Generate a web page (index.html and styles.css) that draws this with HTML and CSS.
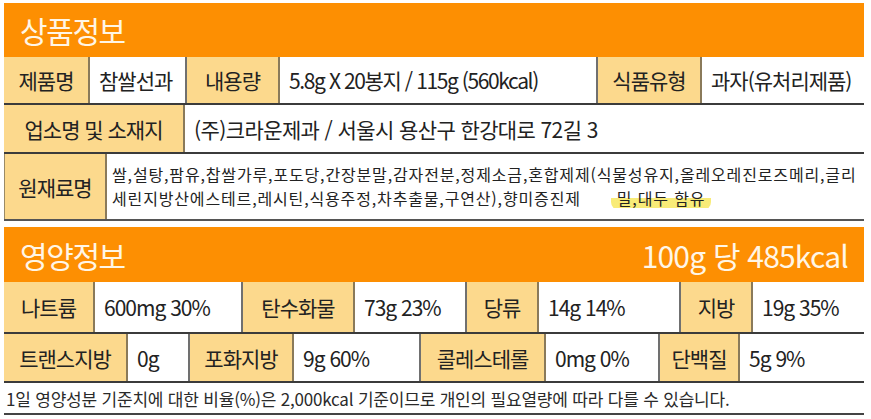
FILE: index.html
```html
<!DOCTYPE html>
<html lang="ko">
<head>
<meta charset="utf-8">
<link rel="stylesheet" href="styles.css">
</head>
<body>
<div class="sheet">
  <div class="head"><span class="head-title">상품정보</span></div>
  <div class="row row1">
    <div class="cell label">제품명</div>
    <div class="cell value">참쌀선과</div>
    <div class="cell label">내용량</div>
    <div class="cell value narrow">5.8g X 20봉지 / 115g (560kcal)</div>
    <div class="cell label">식품유형</div>
    <div class="cell value last">과자(유처리제품)</div>
  </div>
  <div class="row row2">
    <div class="cell label">업소명 및 소재지</div>
    <div class="cell value wide last">(주)크라운제과 / 서울시 용산구 한강대로 72길 3</div>
  </div>
  <div class="row row3">
    <div class="cell label boxed">원재료명</div>
    <div class="cell value small last">
      <p class="line">쌀,설탕,팜유,찹쌀가루,포도당,간장분말,감자전분,정제소금,혼합제제(식물성유지,올레오레진로즈메리,글리</p>
      <p class="line">세린지방산에스테르,레시틴,식용주정,차추출물,구연산),향미증진제<span class="mark">밀,대두 함유</span></p>
    </div>
  </div>

  <div class="head head2"><span class="head-title">영양정보</span><span class="head-kcal">100g 당 485kcal</span></div>
  <div class="row nrow1">
    <div class="cell label">나트륨</div>
    <div class="cell value">600mg 30%</div>
    <div class="cell label">탄수화물</div>
    <div class="cell value">73g 23%</div>
    <div class="cell label">당류</div>
    <div class="cell value">14g 14%</div>
    <div class="cell label">지방</div>
    <div class="cell value last">19g 35%</div>
  </div>
  <div class="row nrow2">
    <div class="cell label">트랜스지방</div>
    <div class="cell value">0g</div>
    <div class="cell label">포화지방</div>
    <div class="cell value">9g 60%</div>
    <div class="cell label">콜레스테롤</div>
    <div class="cell value">0mg 0%</div>
    <div class="cell label">단백질</div>
    <div class="cell value last">5g 9%</div>
  </div>
  <div class="note">1일 영양성분 기준치에 대한 비율(%)은 2,000kcal 기준이므로 개인의 필요열량에 따라 다를 수 있습니다.</div>
</div>
</body>
</html>
```

FILE: styles.css
```css
* { box-sizing: border-box; }
html, body { margin: 0; padding: 0; background: #ffffff; }
body {
  font-family: "Noto Sans CJK KR", "Noto Sans", sans-serif;
  color: #222;
  padding: 3px 0 0 4px;
}
.sheet { width: 860px; }
.head {
  height: 54px;
  background: #fd8f02;
  color: #fff6e6;
  display: flex;
  align-items: center;
  justify-content: space-between;
  padding: 0 16px 0 16px;
}
.head2 { height: 55px; margin-top: 6px; }
.head-title { font-size: 30px; letter-spacing: -1.4px; line-height: 1; }
.head-kcal { font-size: 30px; letter-spacing: -0.8px; line-height: 1; }

.row {
  display: grid;
  border-bottom: 2px solid #3b3b3b;
}
.row1 { grid-template-columns: 86px 97px 93px 318px 104px 1fr; height: 48px; }
.row2 { grid-template-columns: 181px 1fr; height: 49px; }
.row3 { grid-template-columns: 103px 1fr; height: 67px; border-bottom: 2px solid #555; }
.nrow1 { grid-template-columns: 91px 148px 112px 112px 72px 142px 72px 1fr; height: 52px; }
.nrow2 { grid-template-columns: 124px 62px 104px 127px 125px 114px 80px 1fr; height: 49px; }

.cell {
  display: flex;
  align-items: center;
  font-size: 21px;
  letter-spacing: -1px;
  border-right: 2px solid #707070;
  white-space: nowrap;
}
.cell.last { border-right: none; }
.label {
  background: #fcd98d;
  justify-content: center;
  border-right-color: #8a7a5a;
}
.boxed { border-left: 1px solid #9a8a66; }
.value { background: #fff; padding-left: 9px; }
.narrow { letter-spacing: -1.4px; }
.wide { letter-spacing: -0.6px; }
.small {
  flex-direction: column;
  align-items: flex-start;
  justify-content: center;
  font-size: 16px;
  letter-spacing: 0.85px;
  padding-left: 5px;
}
.line { margin: 0; line-height: 23.5px; }
.mark {
  margin-left: 30px;
  padding: 0 6px;
  background: linear-gradient(to bottom, transparent 48%, rgba(247, 232, 96, 0.85) 48%, rgba(247, 232, 96, 0.85) 92%, transparent 92%);
  border-radius: 8px;
}
.note {
  height: 32px;
  display: flex;
  align-items: center;
  font-size: 17px;
  letter-spacing: -0.2px;
  color: #2a2a2a;
  padding-left: 2px;
  border-bottom: 2px solid #444;
}
```
